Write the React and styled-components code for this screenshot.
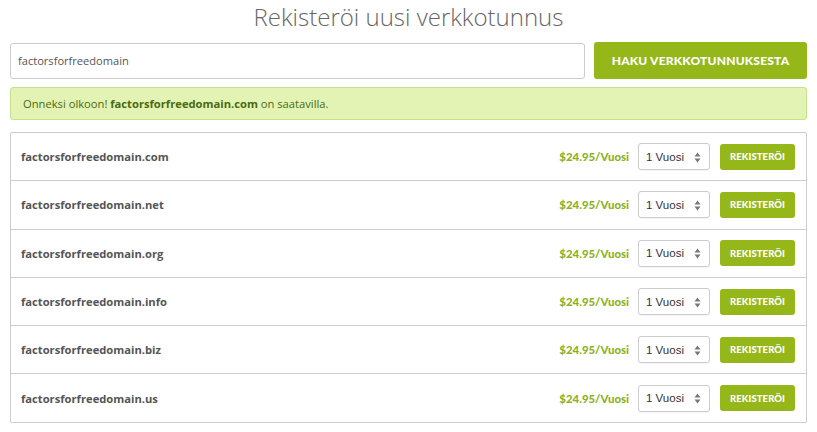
import React from "react";
import styled, { createGlobalStyle } from "styled-components";

const Global = createGlobalStyle`
  html, body { margin: 0; padding: 0; background: #fff; }
  body { font-family: "Open Sans", "Liberation Sans", sans-serif; color: #555; }
  * { box-sizing: border-box; }
`;

const Page = styled.div`
  padding: 0 10px;
  width: 817px;
`;

const Title = styled.h1`
  margin: 0;
  height: 36px;
  line-height: 34px;
  font-size: 24px;
  font-weight: 300;
  color: #666;
  text-align: center;
`;

const SearchRow = styled.div`
  display: flex;
  align-items: center;
  gap: 9px;
  margin-top: 6px;
`;

const Input = styled.input`
  flex: 1;
  height: 36px;
  border: 1px solid #ccc;
  border-radius: 3px;
  padding: 0 7px;
  font-family: "Open Sans", sans-serif;
  font-size: 11.1px;
  color: #555;
  outline: none;
`;

const SearchButton = styled.button`
  width: 213px;
  height: 37px;
  border: none;
  border-radius: 3px;
  background: #95b71a;
  color: #fff;
  font-family: "Lato", sans-serif;
  font-weight: 900;
  font-size: 12px;
  letter-spacing: 0.2px;
  text-transform: uppercase;
  cursor: pointer;
`;

const Alert = styled.div`
  margin-top: 8px;
  height: 33px;
  display: flex;
  align-items: center;
  padding: 0 12px;
  background: #e3f3b4;
  border: 1px solid #c7e08e;
  border-radius: 3px;
  font-size: 11.2px;
  color: #4b6a12;
  b { font-weight: 700; }
`;

const Table = styled.div`
  margin-top: 12px;
  border: 1px solid #ccc;
  border-radius: 2px;
`;

const Row = styled.div`
  display: flex;
  align-items: center;
  height: 47.3px;
  padding: 0 11px 0 10px;
  & + & { border-top: 1px solid #ccc; height: 48.3px; }
`;

const Domain = styled.div`
  flex: 1;
  font-weight: 700;
  font-size: 11.2px;
  color: #555;
`;

const Price = styled.div`
  font-family: "Lato", sans-serif;
  font-weight: 900;
  font-size: 11.4px;
  color: #8db21d;
  margin-right: 9px;
`;

const SelectBox = styled.div`
  position: relative;
  width: 72px;
  height: 27px;
  border: 1px solid #ccc;
  border-radius: 3px;
  background: #fff;
  display: flex;
  align-items: center;
  padding-left: 7px;
  font-family: "Liberation Sans", Arial, sans-serif;
  font-size: 11.5px;
  color: #333;
  margin-right: 10px;
  box-shadow: 0 1px 1px rgba(0,0,0,0.04);
`;

const Arrows = styled.svg`
  position: absolute;
  right: 8px;
  top: 7.5px;
`;

const RegButton = styled.button`
  width: 75px;
  height: 26px;
  border: none;
  border-radius: 3px;
  background: #95b71a;
  color: #fff;
  font-family: "Lato", sans-serif;
  font-weight: 900;
  font-size: 9.5px;
  letter-spacing: 0.1px;
  cursor: pointer;
`;

const tlds = ["com", "net", "org", "info", "biz", "us"];

export default function App() {
  return (
    <>
      <Global />
      <Page>
        <Title>Rekisteröi uusi verkkotunnus</Title>
        <SearchRow>
          <Input defaultValue="factorsforfreedomain" />
          <SearchButton>HAKU VERKKOTUNNUKSESTA</SearchButton>
        </SearchRow>
        <Alert>
          <span>
            Onneksi olkoon! <b>factorsforfreedomain.com</b> on saatavilla.
          </span>
        </Alert>
        <Table>
          {tlds.map((t) => (
            <Row key={t}>
              <Domain>factorsforfreedomain.{t}</Domain>
              <Price>$24.95/Vuosi</Price>
              <SelectBox>
                1 Vuosi
                <Arrows width="7" height="11" viewBox="0 0 7 11">
                  <path d="M3.5 0.5 L6.5 4.5 L0.5 4.5 Z" fill="#777" />
                  <path d="M3.5 10.5 L6.5 6.5 L0.5 6.5 Z" fill="#777" />
                </Arrows>
              </SelectBox>
              <RegButton>REKISTERÖI</RegButton>
            </Row>
          ))}
        </Table>
      </Page>
    </>
  );
}
